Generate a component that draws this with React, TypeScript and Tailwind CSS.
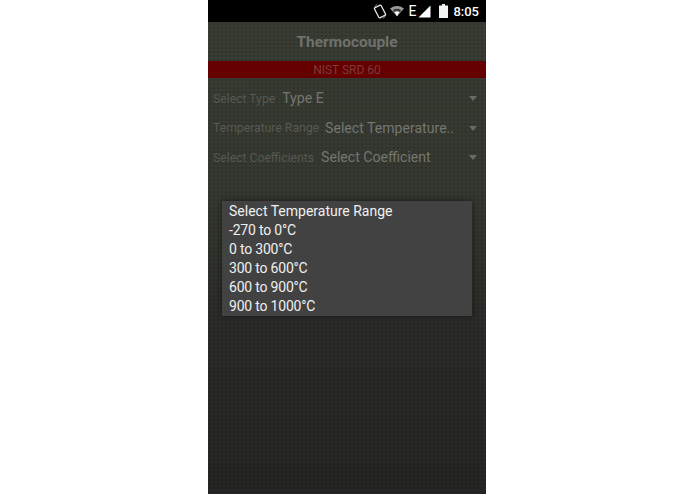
const ranges = ["-270 to 0°C", "0 to 300°C", "300 to 600°C", "600 to 900°C", "900 to 1000°C"];

const rows = [
    { label: "Select Type", value: "Type E", gap: "gap-[7px]" },
    { label: "Temperature Range", value: "Select Temperature..", gap: "gap-[6px]" },
    { label: "Select Coefficients", value: "Select Coefficient", gap: "gap-[7px]" },
];

function StatusBar() {
    return (
        <div className="flex h-[22px] items-center justify-end bg-black pr-[7px] text-white">
            <svg width="14" height="17" viewBox="0 0 15 17" className="mr-[3px]">
                <rect x="3.5" y="2.5" width="8" height="12" rx="1.2" fill="none" stroke="#e8e8e8" strokeWidth="1.4" transform="rotate(-28 7.5 8.5)" />
                <path d="M1 5 L4 1" stroke="#bdbdbd" strokeWidth="0.9" fill="none" />
                <path d="M14 12 L11 16" stroke="#bdbdbd" strokeWidth="0.9" fill="none" />
            </svg>
            <svg width="14" height="12" viewBox="0 0 15 12" className="mr-[4px]">
                <path d="M0 3.2 Q7.5 -2 15 3.2 L7.5 11.5 Z" fill="#9a9a9a" />
                <path d="M3 5.2 Q7.5 2 12 5.2 L7.5 10 Z" fill="#3a3a3a" />
                <path d="M4.8 7.2 Q7.5 5.6 10.2 7.2 L7.5 11.5 Z" fill="#ffffff" />
            </svg>
            <span className="mr-[2px] text-[14px] leading-none font-['Roboto',sans-serif]">E</span>
            <svg width="13" height="13" viewBox="0 0 13 13" className="mr-[8px]">
                <path d="M0.5 12.5 L12.5 0.5 V12.5 Z" fill="#ffffff" />
            </svg>
            <svg width="9" height="14" viewBox="0 0 9 14" className="mr-[5px]">
                <path d="M3 0 H6 V1.5 H9 V14 H0 V1.5 H3 Z" fill="#f2f2f2" />
            </svg>
            <span className="text-[13px] leading-none font-medium font-['Roboto',sans-serif]">8:05</span>
        </div>
    );
}

export default function App() {
    return (
        <div className="flex h-[494px] w-[695px] bg-white pl-[208px] font-['Roboto',sans-serif]">
            <div className="relative flex h-full w-[278px] flex-col overflow-hidden bg-[#272826]">
                <StatusBar />
                <div className="flex-1 bg-[linear-gradient(180deg,#383c33_0%,#353830_35%,#2a2b28_65%,#252624_100%)]">
                    <div className="h-full bg-[radial-gradient(circle,rgba(0,0,0,0.15)_1px,transparent_1.6px)] bg-[length:4px_4px]">
                        <h1 className="flex h-[39px] items-center justify-center pt-[3px] text-[15.5px] font-bold text-[#6f716c]">Thermocouple</h1>
                        <div className="flex h-[17px] items-center justify-center bg-[#660000] pt-[1px] text-[12px] text-[#7d3a38]">NIST SRD 60</div>
                        <div className="flex flex-col gap-[10px] pt-[11px]">
                            {rows.map((row) => (
                                <div key={row.label} className={`flex h-[19.5px] items-center pr-[9px] pl-[5px] ${row.gap}`}>
                                    <span className="text-[12.2px] whitespace-nowrap text-[#565852]">{row.label}</span>
                                    <span className="flex-1 text-[14.1px] whitespace-nowrap text-[#747670]">{row.value}</span>
                                    <span className="h-0 w-0 border-x-[4px] border-t-[5px] border-x-transparent border-t-[#686a65]" />
                                </div>
                            ))}
                        </div>
                    </div>
                </div>
                <div className="absolute top-[201px] left-[14px] flex h-[115px] w-[250px] flex-col bg-[#424242] pt-[1px] pl-[7px] shadow-[0_0_6px_rgba(0,0,0,0.45)]">
                    <div className="flex h-[19px] items-center text-[14px] text-[#f0f0f0]">Select Temperature Range</div>
                    {ranges.map((range) => (
                        <div key={range} className="flex h-[19px] items-center text-[14px] tracking-[-0.2px] text-[#f0f0f0]">{range}</div>
                    ))}
                </div>
            </div>
        </div>
    );
}
